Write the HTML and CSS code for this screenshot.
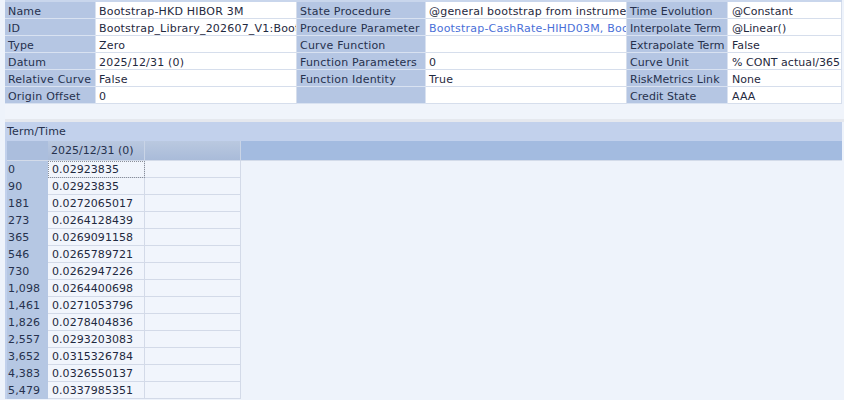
FILE: index.html
```html
<!DOCTYPE html>
<html>
<head>
<meta charset="utf-8">
<link rel="stylesheet" href="styles.css">
</head>
<body>
<div class="props">
  <div class="l">Name</div><div class="v">Bootstrap-HKD HIBOR 3M</div>
  <div class="l">State Procedure</div><div class="v">@general bootstrap from instruments</div>
  <div class="l">Time Evolution</div><div class="v">@Constant</div>

  <div class="l">ID</div><div class="v">Bootstrap_Library_202607_V1:Bootstrap-HKD HIBOR 3M</div>
  <div class="l">Procedure Parameter</div><div class="v link">Bootstrap-CashRate-HIHD03M, Bootstrap-Swap</div>
  <div class="l">Interpolate Term</div><div class="v">@Linear()</div>

  <div class="l">Type</div><div class="v">Zero</div>
  <div class="l">Curve Function</div><div class="v"></div>
  <div class="l">Extrapolate Term</div><div class="v">False</div>

  <div class="l">Datum</div><div class="v">2025/12/31 (0)</div>
  <div class="l">Function Parameters</div><div class="v">0</div>
  <div class="l">Curve Unit</div><div class="v">% CONT actual/365</div>

  <div class="l">Relative Curve</div><div class="v">False</div>
  <div class="l">Function Identity</div><div class="v">True</div>
  <div class="l">RiskMetrics Link</div><div class="v">None</div>

  <div class="l">Origin Offset</div><div class="v">0</div>
  <div class="l"></div><div class="v"></div>
  <div class="l">Credit State</div><div class="v">AAA</div>
</div>
<div class="spacer"></div>
<div class="section">
  <div class="section-title">Term/Time</div>
  <div class="table">
    <div class="th corner"></div><div class="th">2025/12/31 (0)</div><div class="th"></div><div class="th filler"></div>

    <div class="rh">0</div><div class="td focus">0.02923835</div><div class="td"></div><div class="fill"></div>
    <div class="rh">90</div><div class="td">0.02923835</div><div class="td"></div><div class="fill"></div>
    <div class="rh">181</div><div class="td">0.0272065017</div><div class="td"></div><div class="fill"></div>
    <div class="rh">273</div><div class="td">0.0264128439</div><div class="td"></div><div class="fill"></div>
    <div class="rh">365</div><div class="td">0.0269091158</div><div class="td"></div><div class="fill"></div>
    <div class="rh">546</div><div class="td">0.0265789721</div><div class="td"></div><div class="fill"></div>
    <div class="rh">730</div><div class="td">0.0262947226</div><div class="td"></div><div class="fill"></div>
    <div class="rh">1,098</div><div class="td">0.0264400698</div><div class="td"></div><div class="fill"></div>
    <div class="rh">1,461</div><div class="td">0.0271053796</div><div class="td"></div><div class="fill"></div>
    <div class="rh">1,826</div><div class="td">0.0278404836</div><div class="td"></div><div class="fill"></div>
    <div class="rh">2,557</div><div class="td">0.0293203083</div><div class="td"></div><div class="fill"></div>
    <div class="rh">3,652</div><div class="td">0.0315326784</div><div class="td"></div><div class="fill"></div>
    <div class="rh">4,383</div><div class="td">0.0326550137</div><div class="td"></div><div class="fill"></div>
    <div class="rh">5,479</div><div class="td">0.0337985351</div><div class="td"></div><div class="fill"></div>
  </div>
</div>
</body>
</html>
```

FILE: styles.css
```css
html, body {
  margin: 0;
  padding: 0;
  background: #eef3fb;
  font-family: "DejaVu Sans", Verdana, sans-serif;
  font-size: 11px;
  color: #1f2940;
  overflow: hidden;
}
body {
  width: 844px;
  height: 400px;
}
.props {
  margin: 0 2px 0 5px;
  border-top: 2px solid #c9d6ec;
  display: grid;
  grid-template-columns: 91px 201px 129px 201px 101px 114px;
  grid-auto-rows: 17px;
}
.props > div {
  box-sizing: border-box;
  height: 17px;
  padding-top: 2px;
  line-height: 16px;
  padding-left: 3px;
  letter-spacing: 0.2px;
  border-right: 1px solid #d6deec;
  border-bottom: 1px solid #d6deec;
  white-space: nowrap;
  overflow: hidden;
}
.props > div:nth-child(6n+5),
.props > div:nth-child(6n) {
  letter-spacing: 0.05px;
}
.props > div:nth-child(6n) {
  padding-left: 4px;
}
.props .l {
  background: #b5c6e3;
  color: #26314d;
  border-color: #d9e2f1;
}
.props .v {
  background: #ffffff;
}
.props .link {
  color: #4a70d8;
}
.spacer {
  height: 15px;
  margin-left: 5px;
  background: #f0f4fb;
  border-bottom: 3px solid #e5e8ee;
}
.section {
  margin: 0 2px 0 5px;
  background: #c2d1ec;
}
.section-title {
  height: 19px;
  line-height: 20px;
  padding-left: 2px;
  letter-spacing: 0.2px;
  color: #26314d;
}
.table {
  margin-left: 2px;
  display: grid;
  grid-template-columns: 41px 97px 96px 1fr;
  grid-template-rows: 20px;
  grid-auto-rows: 17px;
  background: #eef3fb;
}
.table > div {
  box-sizing: border-box;
  white-space: nowrap;
  overflow: hidden;
}
.th {
  background: linear-gradient(#bac9e0, #a9bbd9);
  border-right: 1px solid #c9d4e6;
  border-bottom: 1px solid #d3dbe9;
  line-height: 20px;
  padding-left: 3px;
  color: #26314d;
}
.th.corner {
  background: #abbedd;
  border-right: none;
}
.th.filler {
  background: #a3bbe0;
  border-right: none;
}
.rh {
  background: #b5c7e3;
  line-height: 18px;
  padding-left: 1px;
  letter-spacing: 0.15px;
  color: #26314d;
}
.td {
  background: #f1f5fc;
  border-right: 1px solid #d3dae8;
  border-bottom: 1px solid #d3dae8;
  line-height: 18px;
  padding-left: 4px;
  letter-spacing: 0.05px;
}
.td.focus {
  outline: 1px dotted #8a8f99;
  outline-offset: -1px;
}
.fill {
  background: #eef3fb;
}
```
